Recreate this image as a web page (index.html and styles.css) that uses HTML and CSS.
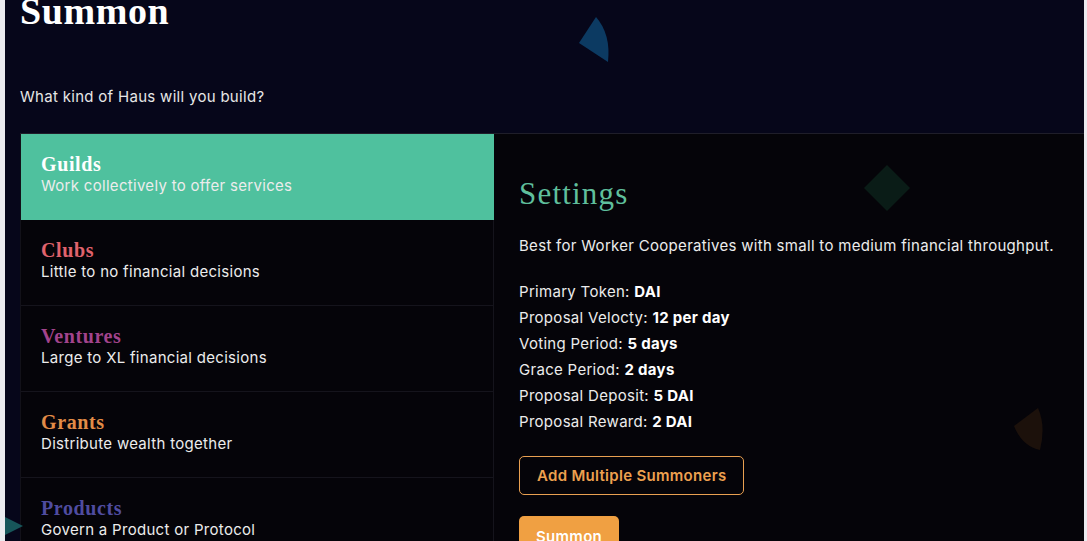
FILE: index.html
```html
<!DOCTYPE html>
<html>
<head>
<meta charset="utf-8">
<link rel="stylesheet" href="styles.css">
</head>
<body>
<div class="page">
  <svg class="deco deco-blue" width="40" height="50" viewBox="0 0 40 50"><path d="M2 27 L19 1 Q34 18 31 46 Z" fill="#0c3a62"/></svg>
  <svg class="deco deco-green" width="50" height="50" viewBox="0 0 50 50"><path d="M25 2 L48 25 L25 48 L2 25 Z" fill="#0a1c17"/></svg>
  <svg class="deco deco-brown" width="40" height="46" viewBox="0 0 40 46"><path d="M4 20 L28 2 Q36 20 30 44 Q12 40 4 20 Z" fill="#1c110b"/></svg>
  <svg class="deco deco-teal" width="30" height="30" viewBox="0 0 30 30"><path d="M0 0 L28 14 L0 28 Z" fill="#17565a"/></svg>

  <header class="header">
    <h1 class="title">Summon</h1>
    <p class="subtitle">What kind of Haus will you build?</p>
  </header>

  <section class="card">
    <ul class="types">
      <li class="type active">
        <span class="type-name">Guilds</span>
        <span class="type-desc">Work collectively to offer services</span>
      </li>
      <li class="type">
        <span class="type-name clubs">Clubs</span>
        <span class="type-desc">Little to no financial decisions</span>
      </li>
      <li class="type">
        <span class="type-name ventures">Ventures</span>
        <span class="type-desc">Large to XL financial decisions</span>
      </li>
      <li class="type">
        <span class="type-name grants">Grants</span>
        <span class="type-desc">Distribute wealth together</span>
      </li>
      <li class="type">
        <span class="type-name products">Products</span>
        <span class="type-desc">Govern a Product or Protocol</span>
      </li>
    </ul>

    <div class="settings">
      <h2 class="settings-title">Settings</h2>
      <p class="settings-desc">Best for Worker Cooperatives with small to medium financial throughput.</p>
      <ul class="settings-list">
        <li>Primary Token: <b>DAI</b></li>
        <li>Proposal Velocty: <b>12 per day</b></li>
        <li>Voting Period: <b>5 days</b></li>
        <li>Grace Period: <b>2 days</b></li>
        <li>Proposal Deposit: <b>5 DAI</b></li>
        <li>Proposal Reward: <b>2 DAI</b></li>
      </ul>
      <button class="btn-outline">Add Multiple Summoners</button>
      <button class="btn-solid">Summon</button>
    </div>
  </section>
</div>
</body>
</html>
```

FILE: styles.css
```css
* { box-sizing: border-box; }
html, body { margin: 0; padding: 0; height: 100%; overflow: hidden; }
body {
  background: #ebebef;
  font-family: Inter, "Noto Sans", sans-serif;
  color: #ececec;
  letter-spacing: 0.3px;
}
.page {
  position: relative;
  margin-left: 5px;
  width: 1079px;
  height: 100%;
  background: #06061a;
  overflow: hidden;
}
.deco { position: absolute; }
.deco-blue { left: 572px; top: 16px; }
.deco-green { left: 857px; top: 163px; z-index: 1; }
.deco-brown { left: 1005px; top: 406px; z-index: 1; }
.deco-teal { left: -10px; top: 512px; }

.header { padding: 0 15px; }
.title {
  margin: -8px 0 0;
  font-family: "Liberation Serif", serif;
  font-weight: 700;
  font-size: 38px;
  line-height: 38px;
  letter-spacing: 0.6px;
  color: #ffffff;
}
.subtitle {
  margin: 57px 0 0;
  font-size: 15px;
  line-height: 20px;
  color: #e6e6e6;
}
.card {
  margin: 26px 0 0 15px;
  display: flex;
  border-top: 1px solid #1f1e2a;
  background: #050409;
}
.types {
  list-style: none;
  margin: 0;
  padding: 0;
  width: 474px;
  flex: none;
  border-left: 1px solid #121119;
}
.type {
  display: flex;
  flex-direction: column;
  height: 86px;
  padding: 19px 20px;
  border-bottom: 1px solid #15141c;
  border-right: 1px solid #15141c;
}
.type.active { background: #4fc19e; border-color: #4fc19e; }
.type-name {
  font-family: "Liberation Serif", serif;
  font-weight: 700;
  font-size: 20px;
  line-height: 23px;
  letter-spacing: 0.6px;
  color: #ffffff;
}
.type-name.clubs { color: #e0636d; }
.type-name.ventures { color: #a2438c; }
.type-name.grants { color: #e28c47; }
.type-name.products { color: #4f4ca0; }
.type-desc {
  font-size: 15px;
  line-height: 20px;
  color: #ececec;
}
.settings {
  position: relative;
  z-index: 2;
  flex: 1;
  padding: 40px 25px 0;
  display: flex;
  flex-direction: column;
  align-items: flex-start;
}
.settings-title {
  margin: 0;
  font-family: "Liberation Serif", serif;
  font-weight: 400;
  font-size: 31px;
  line-height: 40px;
  color: #5fbf9c;
  letter-spacing: 1.2px;
}
.settings-desc {
  margin: 22px 0 0;
  font-size: 15px;
  line-height: 20px;
  color: #ececec;
}
.settings-list {
  list-style: none;
  margin: 23px 0 0;
  padding: 0;
  font-size: 15px;
  line-height: 26px;
  color: #ececec;
}
.settings-list b { font-weight: 700; color: #ffffff; }
.btn-outline {
  margin-top: 21px;
  height: 39px;
  padding: 0 17px;
  background: transparent;
  border: 1px solid #e9a051;
  border-radius: 5px;
  color: #eda04f;
  font-family: Inter, "Noto Sans", sans-serif;
  font-weight: 600;
  font-size: 15px;
  letter-spacing: 0.3px;
}
.btn-solid {
  margin-top: 21px;
  height: 40px;
  padding: 0 17px;
  background: #f0a042;
  border: none;
  border-radius: 5px;
  color: #ffffff;
  font-family: Inter, "Noto Sans", sans-serif;
  font-weight: 600;
  font-size: 15px;
  letter-spacing: 0.3px;
}
```
